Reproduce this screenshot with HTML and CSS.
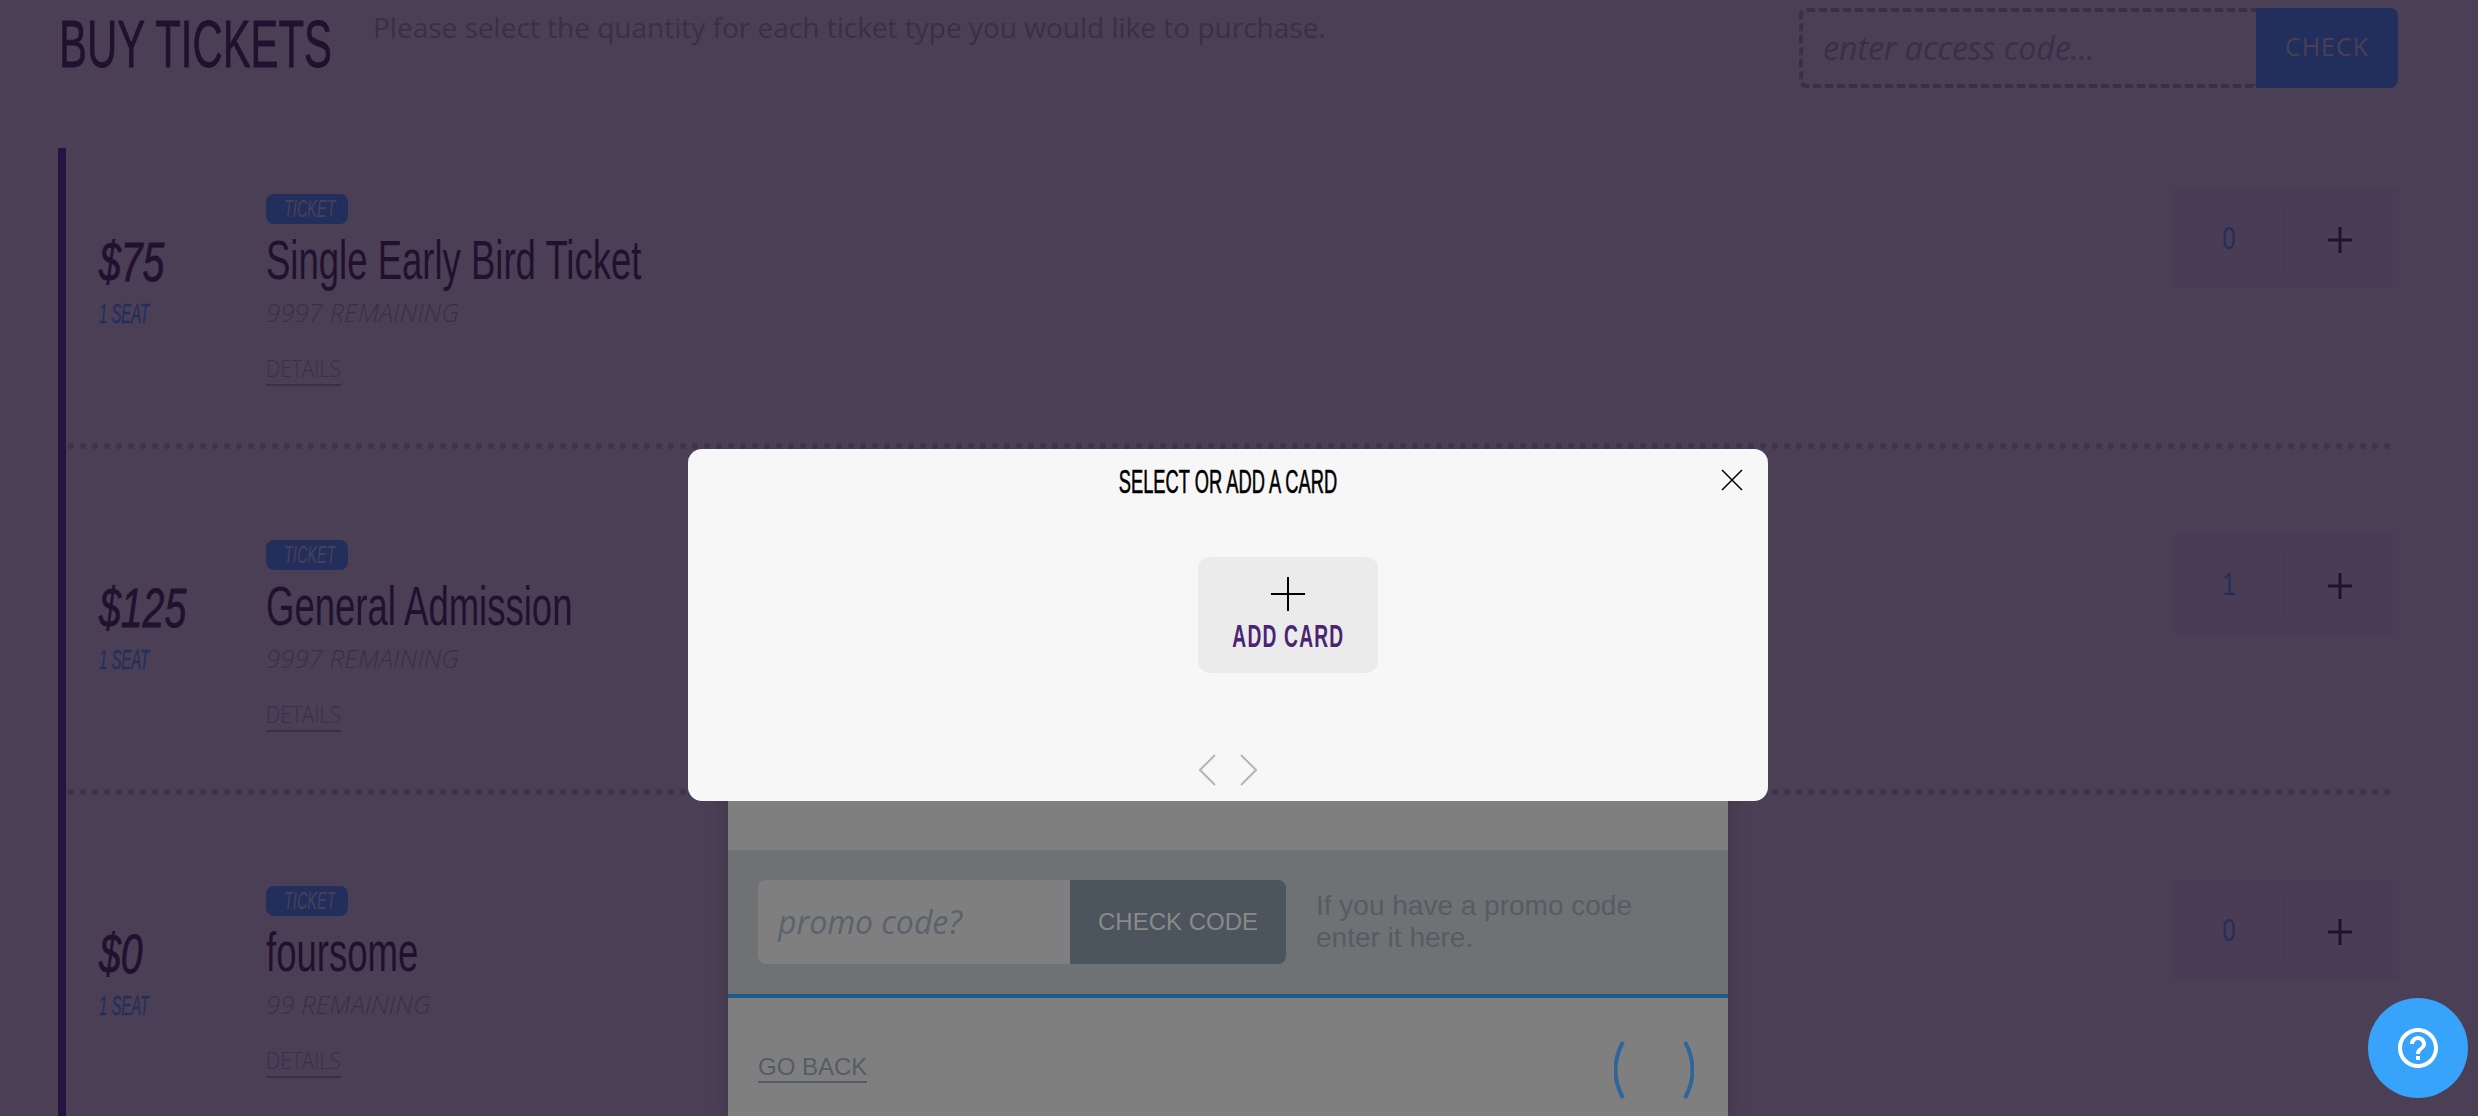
FILE: index.html
```html
<!DOCTYPE html>
<html lang="en">
<head>
<meta charset="UTF-8">
<title>Buy Tickets</title>
<link rel="stylesheet" href="styles.css">
</head>
<body>

<div class="page">
  <header class="head">
    <h1><span class="squeeze">BUY TICKETS</span></h1>
    <p class="lead">Please select the quantity for each ticket type you would like to purchase.</p>
    <div class="access">
      <div class="access-input">enter access code...</div>
      <div class="access-btn">CHECK</div>
    </div>
  </header>

  <div class="tickets">
    <!-- Ticket 1 -->
    <div class="ticket">
      <div class="price">
        <div class="amount">$75</div>
        <div class="seats">1 SEAT</div>
      </div>
      <div class="info">
        <span class="badge"><span>TICKET</span></span>
        <div class="name">Single Early Bird Ticket</div>
        <div class="remaining">9997 REMAINING</div>
        <a class="details">DETAILS</a>
      </div>
      <div class="qty">
        <div class="qty-num"><span>0</span></div>
        <div class="qty-plus"><svg viewBox="0 0 24 26"><path d="M12 0v26M0 13h24"/></svg></div>
      </div>
    </div>

    <!-- Ticket 2 -->
    <div class="ticket">
      <div class="price">
        <div class="amount">$125</div>
        <div class="seats">1 SEAT</div>
      </div>
      <div class="info">
        <span class="badge"><span>TICKET</span></span>
        <div class="name">General Admission</div>
        <div class="remaining">9997 REMAINING</div>
        <a class="details">DETAILS</a>
      </div>
      <div class="qty">
        <div class="qty-num"><span>1</span></div>
        <div class="qty-plus"><svg viewBox="0 0 24 26"><path d="M12 0v26M0 13h24"/></svg></div>
      </div>
    </div>

    <!-- Ticket 3 -->
    <div class="ticket">
      <div class="price">
        <div class="amount">$0</div>
        <div class="seats">1 SEAT</div>
      </div>
      <div class="info">
        <span class="badge"><span>TICKET</span></span>
        <div class="name">foursome</div>
        <div class="remaining">99 REMAINING</div>
        <a class="details">DETAILS</a>
      </div>
      <div class="qty">
        <div class="qty-num"><span>0</span></div>
        <div class="qty-plus"><svg viewBox="0 0 24 26"><path d="M12 0v26M0 13h24"/></svg></div>
      </div>
    </div>
  </div>
</div>

<!-- checkout panel, behind the modal -->
<div class="panel">
  <div class="promo">
    <div class="promo-field">
      <div class="promo-input">promo code?</div>
      <div class="promo-btn">CHECK CODE</div>
    </div>
    <p class="promo-hint">If you have a promo code<br>enter it here.</p>
  </div>
  <div class="panel-foot">
    <a class="back">GO BACK</a>
    <svg class="spinner" viewBox="0 0 80 60">
      <path d="M9 2C-1 20 -1 40 9 58M71 2C81 20 81 40 71 58"/>
    </svg>
  </div>
</div>

<!-- card modal -->
<div class="modal">
  <div class="modal-title">SELECT OR ADD A CARD</div>
  <svg class="modal-close" viewBox="0 0 22 22"><path d="M1 1l20 20M21 1L1 21"/></svg>
  <div class="modal-body">
    <div class="add-card">
      <svg viewBox="0 0 34 34"><path d="M17 0v34M0 17h34"/></svg>
      <span>ADD CARD</span>
    </div>
  </div>
  <div class="pager">
    <svg viewBox="0 0 17 32"><path d="M16 1L1 16l15 15"/></svg>
    <svg viewBox="0 0 17 32"><path d="M1 1l15 15L1 31"/></svg>
  </div>
</div>

<div class="help">
  <svg viewBox="0 0 24 24"><path d="M11 18h2v-2h-2v2zm1-16C6.48 2 2 6.48 2 12s4.48 10 10 10 10-4.48 10-10S17.52 2 12 2zm0 18c-4.41 0-8-3.59-8-8s3.59-8 8-8 8 3.59 8 8-3.59 8-8 8zm0-14c-2.21 0-4 1.79-4 4h2c0-1.1.9-2 2-2s2 .9 2 2c0 2-3 1.75-3 5h2c0-2.25 3-2.5 3-5 0-2.21-1.79-4-4-4z"/></svg>
</div>

</body>
</html>
```

FILE: styles.css
```css
*, *::before, *::after { box-sizing: border-box; margin: 0; padding: 0; }

:root {
  --bg: #4b3f55;
  --ink: #22102f;
  --muted: #3a2f48;
  --navy: #222f5d;
  --narrow: "Liberation Sans", sans-serif;
  --open: "Open Sans", sans-serif;
}

html, body { height: 100%; overflow: hidden; }

body {
  position: relative;
  background: var(--bg);
  color: var(--ink);
  font-family: var(--open);
}

.page { padding: 0 80px 0 58px; }

/* ── HEADER ── */
.head {
  display: flex;
  align-items: flex-start;
  height: 148px;
}

h1 {
  flex: 0 0 315px;
  min-width: 0;
  padding: 6px 0 0 1px;
  font-family: var(--narrow);
  font-size: 67px;
  font-weight: 400;
  line-height: 76px;
  white-space: nowrap;
}

/* no condensed face installed, so the headline faces are squeezed sideways */
.squeeze {
  display: inline-block;
  transform: scaleX(0.625);
  transform-origin: left;
  -webkit-text-stroke: 0.8px var(--ink);
}

.lead {
  flex: 1;
  padding-top: 9px;
  font-size: 28px;
  line-height: 36px;
  color: var(--muted);
}

.access { display: flex; flex: 0 0 599px; height: 80px; margin-top: 8px; }

.access-input {
  flex: 1;
  padding-left: 20px;
  border: 4px dashed var(--muted);
  border-right: 0;
  border-radius: 8px 0 0 8px;
  font-size: 32px;
  font-style: italic;
  line-height: 72px;
  color: var(--muted);
}

.access-btn {
  width: 142px;
  background: var(--navy);
  border-radius: 0 8px 8px 0;
  font-size: 25px;
  line-height: 76px;
  letter-spacing: 1px;
  text-align: center;
  color: var(--bg);
}

/* ── TICKETS ── */
.tickets { border-left: 8px solid #27133f; }

.ticket {
  display: flex;
  align-items: flex-start;
  height: 346px;
  margin: 0 6px 0 2px;
  padding: 91px 0 0 31px;
  border-bottom: 6px dotted #3f334c;
}

.ticket:first-child { height: 301px; padding-top: 46px; }

.price { flex: 0 0 167px; padding-top: 35px; font-family: var(--narrow); font-style: italic; }

.amount {
  font-size: 56px;
  line-height: 66px;
  transform: scaleX(0.7);
  transform-origin: left;
  -webkit-text-stroke: 0.8px var(--ink);
}

.seats {
  margin-top: 4px;
  font-size: 28px;
  line-height: 30px;
  color: var(--navy);
  transform: scaleX(0.53);
  transform-origin: left;
  -webkit-text-stroke: 0.4px var(--navy);
}

.info { flex: 1; display: flex; flex-direction: column; align-items: flex-start; }

.badge {
  width: 82px;
  height: 30px;
  padding-left: 18px;
  background: var(--navy);
  border-radius: 8px;
  font-family: var(--narrow);
  font-size: 23px;
  font-style: italic;
  line-height: 30px;
  color: var(--bg);
}

.badge span { display: inline-block; transform: scaleX(0.63); transform-origin: left; }

.name {
  margin-top: 3px;
  font-family: var(--narrow);
  font-size: 56px;
  line-height: 66px;
  white-space: nowrap;
  transform: scaleX(0.652);
  transform-origin: left;
}

.remaining {
  margin-top: 3px;
  font-size: 25.8px;
  font-style: italic;
  font-weight: 300;
  line-height: 32px;
  color: var(--muted);
}

.details {
  margin-top: 26px;
  padding-bottom: 2px;
  border-bottom: 2px solid var(--muted);
  font-size: 23px;
  font-weight: 300;
  line-height: 28px;
  color: var(--muted);
  transform: scaleX(0.88);
  transform-origin: left;
}

.qty {
  display: flex;
  align-items: center;
  flex: 0 0 225px;
  height: 100px;
  margin: -6px -6px 0 0;
  background: #4a3c54;
}

.qty-num {
  width: 112px;
  height: 60px;
  border-right: 1px solid #433650;
  font-family: var(--narrow);
  font-size: 32px;
  line-height: 60px;
  text-align: center;
  color: var(--navy);
}

.qty-num span { display: inline-block; transform: scaleX(0.75); }

.qty-plus { flex: 1; display: flex; justify-content: center; }
.qty-plus svg { width: 24px; height: 26px; margin: 4px 4px 0 0; }
.qty-plus path { fill: none; stroke: var(--ink); stroke-width: 3; }

/* ── CHECKOUT PANEL ── */
.panel {
  position: absolute;
  top: 780px;
  left: 728px;
  width: 1000px;
  height: 336px;
  padding-top: 70px;
  background: #7f7f7f;
  box-shadow: 0 0 20px rgba(0,0,0,0.2);
}

.promo {
  display: flex;
  align-items: center;
  gap: 30px;
  height: 148px;
  padding-left: 30px;
  background: #6e7274;
  border-bottom: 4px solid #1f5a8f;
}

.promo-field { display: flex; height: 84px; border-radius: 8px; overflow: hidden; }

.promo-input {
  width: 312px;
  padding-left: 20px;
  background: #7f7f7f;
  font-size: 32px;
  font-style: italic;
  line-height: 84px;
  color: #59636b;
}

.promo-btn {
  width: 216px;
  background: #4c545d;
  font-family: "Liberation Sans", sans-serif;
  font-size: 24px;
  line-height: 84px;
  text-align: center;
  color: #8a8a8a;
}

.promo-hint {
  font-family: "Liberation Sans", sans-serif;
  font-size: 28px;
  line-height: 32px;
  color: #565c62;
}

.panel-foot {
  display: flex;
  align-items: flex-start;
  justify-content: space-between;
  padding: 42px 34px 0 30px;
}

.back {
  margin-top: 12px;
  border-bottom: 2px solid #545c66;
  font-family: "Liberation Sans", sans-serif;
  font-size: 24px;
  line-height: 29px;
  color: #545c66;
}

.spinner { width: 80px; height: 60px; }
.spinner path { fill: none; stroke: #2f6699; stroke-width: 4; }

/* ── MODAL ── */
.modal {
  position: absolute;
  top: 449px;
  left: 688px;
  width: 1080px;
  height: 352px;
  background: #f7f7f7;
  border-radius: 14px;
  color: #000;
}

.modal-title {
  margin-top: 13px;
  font-family: var(--narrow);
  font-size: 33px;
  line-height: 40px;
  text-align: center;
  white-space: nowrap;
  transform: scaleX(0.555);
  -webkit-text-stroke: 0.6px #000;
}

.modal-close {
  position: absolute;
  top: 20px;
  right: 25px;
  width: 22px;
  height: 22px;
}
.modal-close path { fill: none; stroke: #000; stroke-width: 1.5; }

.modal-body { display: flex; padding: 55px 0 0 510px; }

.add-card {
  display: flex;
  flex-direction: column;
  align-items: center;
  width: 180px;
  height: 116px;
  padding-top: 20px;
  background: #ebebeb;
  border-radius: 12px;
}

.add-card svg { flex: none; width: 34px; height: 34px; }
.add-card path { fill: none; stroke: #000; stroke-width: 2; }

.add-card span {
  margin-top: 9px;
  font-family: var(--narrow);
  font-size: 32px;
  font-weight: 700;
  line-height: 32px;
  letter-spacing: 2px;
  color: #4a2373;
  white-space: nowrap;
  transform: scaleX(0.6);
}

.pager { display: flex; gap: 24px; justify-content: center; margin-top: 81px; padding-right: 1px; }
.pager svg { width: 17px; height: 32px; }
.pager path { fill: none; stroke: #b5b5b5; stroke-width: 2; }

/* ── HELP BUTTON ── */
.help {
  position: absolute;
  top: 998px;
  left: 2368px;
  width: 100px;
  height: 100px;
  display: flex;
  align-items: center;
  justify-content: center;
  background: #38a3fb;
  border-radius: 50%;
}

.help svg { width: 48px; height: 48px; fill: #fff; }
```
